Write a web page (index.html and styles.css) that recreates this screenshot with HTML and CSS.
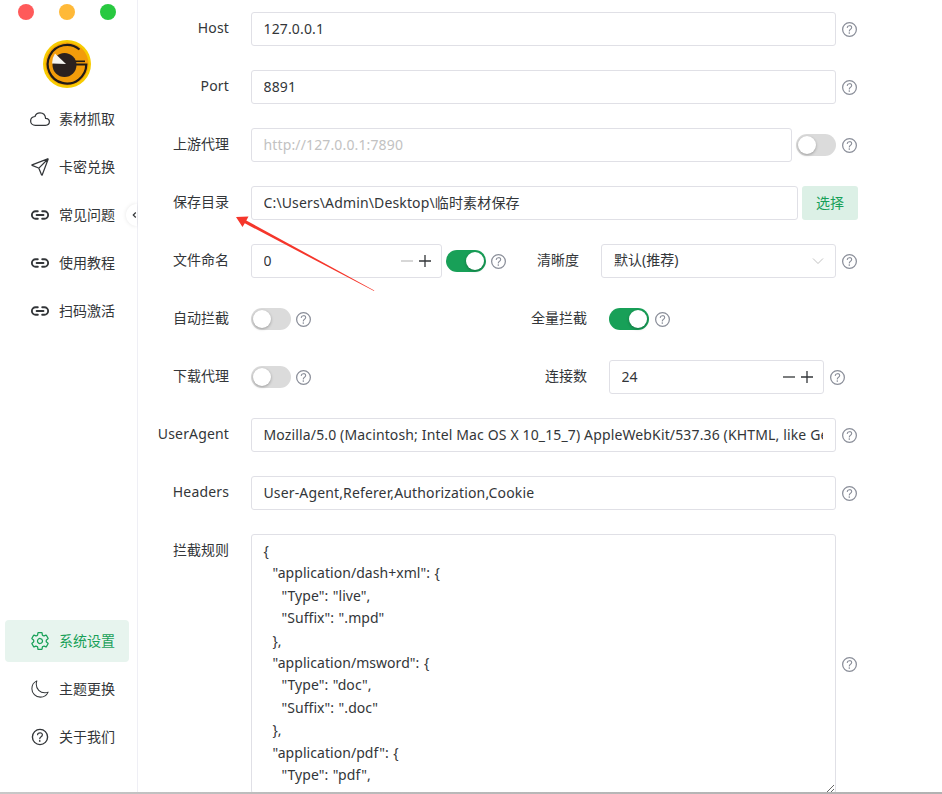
FILE: index.html
```html
<!DOCTYPE html>
<html lang="zh-CN">
<head>
<meta charset="utf-8">
<title>系统设置</title>
<link rel="stylesheet" href="styles.css">
</head>
<body>
<svg class="defs" width="0" height="0" aria-hidden="true">
  <defs>
    <g id="i-cloud"><path d="M400 240c-8.89-89.54-71-144-144-144-69 0-113.44 48.2-128 96-60 6-112 43.59-112 112 0 66 54 112 120 112h260c55 0 100-27.44 100-88 0-59.82-53-85.76-96-88z" fill="none" stroke="currentColor" stroke-width="32" stroke-linejoin="round"/></g>
    <g id="i-send"><path d="M53.12 199.94l400-151.39a8 8 0 0110.33 10.33l-151.39 400a8 8 0 01-15-.34l-67.4-166.09a16 16 0 00-10.11-10.11L53.46 215a8 8 0 01-.34-15.06zM460 52L227 285" fill="none" stroke="currentColor" stroke-width="32" stroke-linecap="round" stroke-linejoin="round"/></g>
    <g id="i-link"><path d="M200.66 352H144a96 96 0 010-192h55.41M312.59 160H368a96 96 0 010 192h-56.66M169.07 256h175.86" fill="none" stroke="currentColor" stroke-width="48" stroke-linecap="round" stroke-linejoin="round"/></g>
    <g id="i-gear"><path d="M262.29 192.31a64 64 0 1057.4 57.4 64.13 64.13 0 00-57.4-57.4zM416.39 256a154.34 154.34 0 01-1.53 20.79l45.21 35.46a10.81 10.81 0 012.45 13.75l-42.77 74a10.81 10.81 0 01-13.14 4.59l-44.9-18.08a16.11 16.11 0 00-15.17 1.75A164.48 164.48 0 01325 400.8a15.94 15.94 0 00-8.82 12.14l-6.73 47.89a11.08 11.08 0 01-10.68 9.17h-85.54a11.11 11.11 0 01-10.69-8.87l-6.72-47.82a16.07 16.07 0 00-9-12.22 155.3 155.3 0 01-21.46-12.57 16 16 0 00-15.11-1.71l-44.89 18.07a10.81 10.81 0 01-13.14-4.58l-42.77-74a10.8 10.8 0 012.45-13.75l38.21-30a16.05 16.05 0 006-14.08c-.36-4.17-.58-8.33-.58-12.5s.21-8.27.58-12.35a16 16 0 00-6.07-13.94l-38.19-30A10.81 10.81 0 0149.48 186l42.77-74a10.81 10.81 0 0113.14-4.59l44.9 18.08a16.11 16.11 0 0015.17-1.75A164.48 164.48 0 01187 111.2a15.94 15.94 0 008.82-12.14l6.73-47.89A11.08 11.08 0 01213.23 42h85.54a11.11 11.11 0 0110.69 8.87l6.72 47.82a16.07 16.07 0 009 12.22 155.3 155.3 0 0121.46 12.57 16 16 0 0015.11 1.71l44.89-18.07a10.81 10.81 0 0113.14 4.58l42.77 74a10.8 10.8 0 01-2.45 13.75l-38.21 30a16.05 16.05 0 00-6.05 14.08c.33 4.14.55 8.3.55 12.47z" fill="none" stroke="currentColor" stroke-width="32" stroke-linecap="round" stroke-linejoin="round"/></g>
    <g id="i-moon"><path d="M160 136c0-30.62 4.51-61.61 16-88C99.57 81.27 48 159.32 48 248c0 119.29 96.71 216 216 216 88.68 0 166.73-51.57 200-128-26.39 11.49-57.38 16-88 16-119.29 0-216-96.71-216-216z" fill="none" stroke="currentColor" stroke-width="26" stroke-linecap="round" stroke-linejoin="round"/></g>
    <g id="i-help"><path d="M256 80a176 176 0 10176 176A176 176 0 00256 80z" fill="none" stroke="currentColor" stroke-width="32"/><path d="M200 202.29s.84-17.5 19.57-32.57C230.68 160.77 244 158.18 256 158c10.93-.14 20.69 1.67 26.53 4.45 10 4.76 29.47 16.38 29.47 41.09 0 26-17 37.81-36.37 50.8S251 281.43 251 296" fill="none" stroke="currentColor" stroke-width="28" stroke-linecap="round"/><circle cx="250" cy="348" r="20" fill="currentColor"/></g>
    <g id="i-minus"><path d="M0 6h12" stroke="currentColor" stroke-width="1.3" fill="none"/></g>
    <g id="i-plus"><path d="M0 6h12M6 0v12" stroke="currentColor" stroke-width="1.3" fill="none"/></g>
  </defs>
</svg>

<div class="app">
  <aside class="sidebar">
    <div class="lights">
      <span class="light light-red"></span>
      <span class="light light-amber"></span>
      <span class="light light-green"></span>
    </div>
    <svg class="logo" viewBox="0 0 48 48" aria-label="logo">
      <circle cx="24" cy="24" r="24" fill="#f7cb00"/>
      <circle cx="24" cy="24" r="21.500" fill="#f29c0a"/>
      <path d="M36.500 9.500A19.300 19.300 0 1 0 43.300 24.500H31" fill="none" stroke="#1f1a17" stroke-width="2.200"/>
      <path d="M30 21.300H42" fill="none" stroke="#1f1a17" stroke-width="1.600"/>
      <circle cx="21.500" cy="25" r="12" fill="#2b211f"/>
      <path d="M12 13.500Q9 18 9 23.500L23 24z" fill="#f6f4f1"/>
    </svg>
    <nav class="nav">
      <a class="nav-item"><svg class="nav-icon" viewBox="0 0 512 512"><use href="#i-cloud"/></svg><span>素材抓取</span></a>
      <a class="nav-item"><svg class="nav-icon" viewBox="0 0 512 512"><use href="#i-send"/></svg><span>卡密兑换</span></a>
      <a class="nav-item"><svg class="nav-icon" viewBox="0 0 512 512"><use href="#i-link"/></svg><span>常见问题</span></a>
      <a class="nav-item"><svg class="nav-icon" viewBox="0 0 512 512"><use href="#i-link"/></svg><span>使用教程</span></a>
      <a class="nav-item"><svg class="nav-icon" viewBox="0 0 512 512"><use href="#i-link"/></svg><span>扫码激活</span></a>
    </nav>
    <nav class="nav nav-bottom">
      <a class="nav-item is-active"><svg class="nav-icon" viewBox="0 0 512 512"><use href="#i-gear"/></svg><span>系统设置</span></a>
      <a class="nav-item"><svg class="nav-icon" viewBox="0 0 512 512"><use href="#i-moon"/></svg><span>主题更换</span></a>
      <a class="nav-item"><svg class="nav-icon" viewBox="24 24 464 464"><use href="#i-help"/></svg><span>关于我们</span></a>
    </nav>
    <button class="collapse" type="button" aria-label="collapse"><svg class="collapse-chevron" viewBox="0 0 6 8"><path d="M4.500 1 1.500 4l3 3" fill="none" stroke="currentColor" stroke-width="1.400"/></svg></button>
  </aside>

  <main class="main">
    <div class="row">
      <label class="label label-latin">Host</label>
      <input class="input grow" value="127.0.0.1">
      <svg class="help" viewBox="64 64 384 384"><use href="#i-help"/></svg>
    </div>
    <div class="row">
      <label class="label label-latin">Port</label>
      <input class="input grow" value="8891">
      <svg class="help" viewBox="64 64 384 384"><use href="#i-help"/></svg>
    </div>
    <div class="row">
      <label class="label">上游代理</label>
      <input class="input grow" placeholder="http://127.0.0.1:7890">
      <span class="switch switch-inline"><span class="knob"></span></span>
      <svg class="help" viewBox="64 64 384 384"><use href="#i-help"/></svg>
    </div>
    <div class="row">
      <label class="label">保存目录</label>
      <input class="input input-path" value="C:\Users\Admin\Desktop\临时素材保存">
      <button class="choose" type="button">选择</button>
    </div>
    <div class="row">
      <label class="label">文件命名</label>
      <div class="group group-name">
        <div class="number number-name">
          <input class="number-value" value="0">
          <svg class="step step-off" viewBox="0 0 12 12"><use href="#i-minus"/></svg>
          <svg class="step" viewBox="0 0 12 12"><use href="#i-plus"/></svg>
        </div>
        <span class="switch switch-inline is-on"><span class="knob"></span></span>
        <svg class="help" viewBox="64 64 384 384"><use href="#i-help"/></svg>
      </div>
      <label class="label-inline">清晰度</label>
      <div class="select">
        <span class="select-value">默认(推荐)</span>
        <svg class="select-arrow" viewBox="0 0 12 8"><path d="M1 1.500 6 6.500l5-5" fill="none" stroke="currentColor" stroke-width="1"/></svg>
      </div>
      <svg class="help" viewBox="64 64 384 384"><use href="#i-help"/></svg>
    </div>
    <div class="row">
      <label class="label">自动拦截</label>
      <div class="group group-half">
        <span class="switch"><span class="knob"></span></span>
        <svg class="help" viewBox="64 64 384 384"><use href="#i-help"/></svg>
      </div>
      <label class="label-inline">全量拦截</label>
      <span class="switch is-on"><span class="knob"></span></span>
      <svg class="help" viewBox="64 64 384 384"><use href="#i-help"/></svg>
    </div>
    <div class="row">
      <label class="label">下载代理</label>
      <div class="group group-conn">
        <span class="switch"><span class="knob"></span></span>
        <svg class="help" viewBox="64 64 384 384"><use href="#i-help"/></svg>
      </div>
      <label class="label-inline">连接数</label>
      <div class="number number-conn">
        <input class="number-value" value="24">
        <svg class="step" viewBox="0 0 12 12"><use href="#i-minus"/></svg>
        <svg class="step" viewBox="0 0 12 12"><use href="#i-plus"/></svg>
      </div>
      <svg class="help" viewBox="64 64 384 384"><use href="#i-help"/></svg>
    </div>
    <div class="row">
      <label class="label label-latin">UserAgent</label>
      <input class="input grow" value="Mozilla/5.0 (Macintosh; Intel Mac OS X 10_15_7) AppleWebKit/537.36 (KHTML, like Gecko) Chrome/120.0.0.0 Safari/537.36">
      <svg class="help" viewBox="64 64 384 384"><use href="#i-help"/></svg>
    </div>
    <div class="row">
      <label class="label label-latin">Headers</label>
      <input class="input grow" value="User-Agent,Referer,Authorization,Cookie">
      <svg class="help" viewBox="64 64 384 384"><use href="#i-help"/></svg>
    </div>
    <div class="row row-rules">
      <label class="label label-top">拦截规则</label>
      <textarea class="rules" spellcheck="false">{
  "application/dash+xml": {
    "Type": "live",
    "Suffix": ".mpd"
  },
  "application/msword": {
    "Type": "doc",
    "Suffix": ".doc"
  },
  "application/pdf": {
    "Type": "pdf",</textarea>
      <svg class="help" viewBox="64 64 384 384"><use href="#i-help"/></svg>
    </div>
  </main>

  <svg class="annotation" viewBox="0 0 942 794" aria-hidden="true">
    <path d="M236 217 248.500 216.500 246.300 220.500 374.300 290.500 374 291 244.800 223.300 242.500 227z" fill="#f5362b"/>
  </svg>
  <div class="window-edge"></div>
</div>
</body>
</html>
```
FILE: styles.css
```css
* { box-sizing: border-box; }

html, body {
  margin: 0;
  height: 100%;
  overflow: hidden;
  background: #fff;
}

body {
  font-family: "Noto Sans", "Noto Sans CJK SC", sans-serif;
  font-size: 14px;
  line-height: 22px;
  color: #333639;
}

.defs { position: absolute; }

.app {
  position: relative;
  display: flex;
  height: 794px;
  overflow: hidden;
}

/* sidebar */
.sidebar {
  position: relative;
  flex: 0 0 138px;
  display: flex;
  flex-direction: column;
  border-right: 1px solid #efeff5;
  background: #fff;
}

.lights {
  display: flex;
  gap: 25px;
  padding: 4px 0 0 18px;
}

.light {
  width: 16px;
  height: 16px;
  border-radius: 50%;
}
.light-red { background: #ff5a5a; }
.light-amber { background: #ffb938; }
.light-green { background: #28c940; }

.logo {
  display: block;
  width: 48px;
  height: 48px;
  margin: 20px 0 0 43px;
}

.nav {
  display: flex;
  flex-direction: column;
  gap: 6px;
  padding: 10px 8px 0 5px;
}

.nav-bottom {
  margin-top: auto;
  padding-top: 0;
  padding-bottom: 36px;
}

.nav-item {
  display: flex;
  align-items: center;
  gap: 9px;
  height: 42px;
  padding-left: 25px;
  border-radius: 4px;
  color: #333639;
}

.nav-item.is-active {
  background: #e7f4ee;
  color: #18a058;
}

.nav-icon {
  flex: none;
  width: 20px;
  height: 20px;
}

.collapse {
  position: absolute;
  top: 204px;
  right: 0;
  width: 11px;
  height: 22px;
  padding: 0;
  border: 0;
  border-radius: 11px 0 0 11px;
  background: #fff;
  box-shadow: 0 0 4px rgba(0, 0, 0, .1);
  color: #333639;
}

.collapse-chevron {
  position: absolute;
  top: 7px;
  left: 6px;
  width: 5px;
  height: 8px;
}

/* form */
.main {
  position: relative;
  flex: 1;
  padding-top: 12px;
  background: #fff;
}

.row {
  display: flex;
  align-items: center;
  width: 718px;
  height: 34px;
  margin-bottom: 24px;
}

.row-rules {
  height: 260px;
  margin-bottom: 0;
}

.label {
  flex: none;
  width: 91px;
  margin-right: 22px;
  padding-bottom: 2px;
  text-align: right;
}

.label-latin { letter-spacing: .15px; }

.label-top {
  align-self: flex-start;
  margin-top: 5px;
}

.label-inline {
  flex: none;
  margin-right: 22px;
  padding-bottom: 2px;
  text-align: right;
}

.input,
.number-value {
  font: inherit;
  color: #333639;
  outline: none;
}

.input {
  min-width: 0;
  height: 34px;
  padding: 0 12px 2px 11.5px;
  border: 1px solid #e0e0e6;
  border-radius: 3px;
  background: #fff;
  letter-spacing: .14px;
}

.input::placeholder { color: #c2c2c2; opacity: 1; }

.grow { flex: 1 1 0; }

.input-path { width: 547px; flex: none; }

.choose {
  flex: none;
  width: 56px;
  height: 34px;
  margin-left: 4px;
  padding: 0;
  border: 0;
  border-radius: 3px;
  background: #dcf0e6;
  color: #18a058;
  font: inherit;
}

.help {
  flex: none;
  width: 15px;
  height: 15px;
  margin: 0 0 0 5px;
  color: #8a8e99;
}

.row > .help:last-child { margin-left: 6px; margin-right: -1px; }

.switch {
  position: relative;
  flex: none;
  display: block;
  width: 40px;
  height: 22px;
  border-radius: 11px;
  background: #dbdbdb;
}

.switch-inline { margin-left: 4px; }

.switch.is-on { background: #18a058; }

.knob {
  position: absolute;
  top: 2px;
  left: 2px;
  width: 18px;
  height: 18px;
  border-radius: 50%;
  background: #fff;
  box-shadow: 0 1px 3px rgba(0, 0, 0, .3);
}

.switch.is-on .knob { left: 20px; }

.group {
  flex: none;
  display: flex;
  align-items: center;
}

.group-name { width: 286px; }
.group-half { width: 280px; }
.group-conn { width: 294px; }

.number {
  flex: none;
  display: flex;
  align-items: center;
  gap: 6px;
  height: 34px;
  padding: 0 10px 0 11.5px;
  border: 1px solid #e0e0e6;
  border-radius: 3px;
}

.number-name { width: 191px; }
.number-conn { width: 215px; }

.number-value {
  flex: 1;
  min-width: 0;
  height: 30px;
  padding: 0 0 2px;
  border: 0;
  background: transparent;
}

.step {
  flex: none;
  width: 12px;
  height: 12px;
  color: #333639;
}

.step-off { color: #c2c2c2; }

.select {
  flex: none;
  position: relative;
  display: flex;
  align-items: center;
  justify-content: space-between;
  width: 235px;
  height: 34px;
  padding: 0 11px 0 12px;
  border: 1px solid #e0e0e6;
  border-radius: 3px;
}

.select-value { padding-bottom: 2px; }

.select-arrow {
  width: 12px;
  height: 8px;
  color: #c2c2c2;
}

.rules {
  flex: 1 1 0;
  height: 260px;
  padding: 5px 12px 5px 11.5px;
  border: 1px solid #e0e0e6;
  border-radius: 3px;
  outline: none;
  overflow: hidden;
  resize: vertical;
  font: inherit;
  line-height: 22.4px;
  letter-spacing: .05px;
  word-spacing: .8px;
  color: #333639;
}

/* overlays */
.annotation {
  position: absolute;
  inset: 0;
  width: 942px;
  height: 794px;
  pointer-events: none;
}

.window-edge {
  position: absolute;
  left: 0;
  right: 0;
  bottom: 0;
  height: 2px;
  background: linear-gradient(90deg, #c8c8c8, #bbb 30%, #b2b2b2);
}
```
